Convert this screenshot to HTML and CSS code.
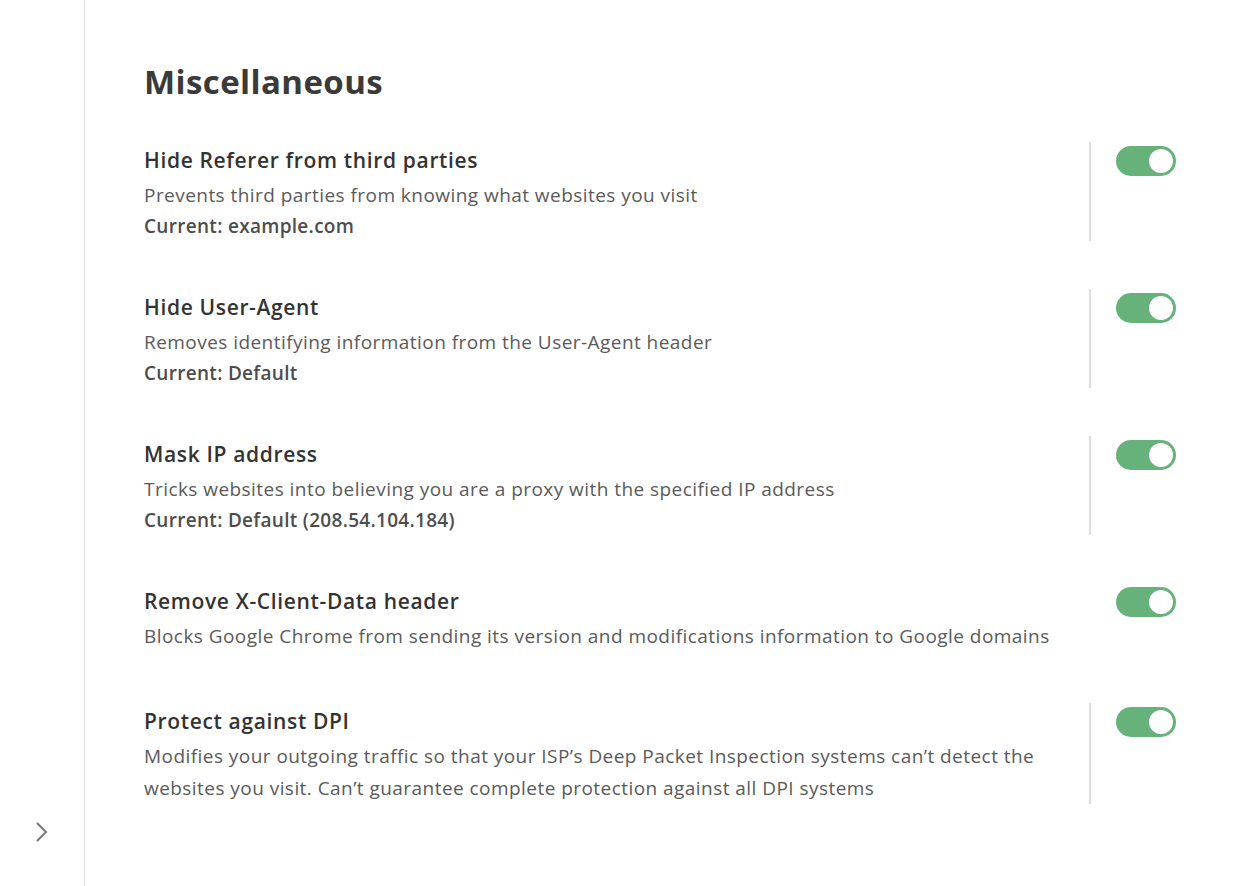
FILE: index.html
```html
<!DOCTYPE html>
<html lang="en">
<head>
<meta charset="utf-8">
<title>Miscellaneous</title>
<link rel="stylesheet" href="styles.css">
</head>
<body>
<div class="app">
  <aside class="sidebar">
    <svg class="chev" width="14" height="22" viewBox="0 0 14 22"><path d="M2 2 L11 11 L2 20" fill="none" stroke="#777" stroke-width="2"/></svg>
  </aside>
  <main class="content">
    <h1 class="heading">Miscellaneous</h1>
    <section class="rows">
      <div class="row">
        <div class="text">
          <div class="title">Hide Referer from third parties</div>
          <div class="desc">Prevents third parties from knowing what websites you visit</div>
          <div class="current">Current: example.com</div>
        </div>
        <div class="ctrl"><span class="toggle on"><span class="knob"></span></span></div>
      </div>
      <div class="row">
        <div class="text">
          <div class="title">Hide User-Agent</div>
          <div class="desc">Removes identifying information from the User-Agent header</div>
          <div class="current">Current: Default</div>
        </div>
        <div class="ctrl"><span class="toggle on"><span class="knob"></span></span></div>
      </div>
      <div class="row">
        <div class="text">
          <div class="title">Mask IP address</div>
          <div class="desc">Tricks websites into believing you are a proxy with the specified IP address</div>
          <div class="current">Current: Default (208.54.104.184)</div>
        </div>
        <div class="ctrl"><span class="toggle on"><span class="knob"></span></span></div>
      </div>
      <div class="row">
        <div class="text">
          <div class="title">Remove X-Client-Data header</div>
          <div class="desc">Blocks Google Chrome from sending its version and modifications information to Google domains</div>
        </div>
        <div class="ctrl no-line"><span class="toggle on"><span class="knob"></span></span></div>
      </div>
      <div class="row">
        <div class="text">
          <div class="title">Protect against DPI</div>
          <div class="desc">Modifies your outgoing traffic so that your ISP’s Deep Packet Inspection systems can’t detect the websites you visit. Can’t guarantee complete protection against all DPI systems</div>
        </div>
        <div class="ctrl"><span class="toggle on"><span class="knob"></span></span></div>
      </div>
    </section>
  </main>
</div>
</body>
</html>
```
FILE: styles.css
```css
html, body {
  margin: 0;
  padding: 0;
  background: #fff;
}
body {
  font-family: "Open Sans", "Noto Sans", "Liberation Sans", sans-serif;
  color: #333;
}
.app {
  display: flex;
  min-height: 886px;
}
.sidebar {
  width: 85px;
  border-right: 1px solid #dcdcdc;
  display: flex;
  flex-direction: column;
  justify-content: flex-end;
  align-items: flex-start;
  padding-left: 35px;
  padding-bottom: 43px;
  box-sizing: border-box;
  flex: none;
}
.chev { display: block; }
.content {
  flex: 1;
  padding: 56px 0 0 59px;
}
.heading {
  margin: 0 0 34px;
  font-size: 33px;
  line-height: 52px;
  font-weight: 700;
  color: #3a3a3a;
  letter-spacing: 0.4px;
}
.rows {
  display: flex;
  flex-direction: column;
  gap: 48px;
}
.row {
  display: flex;
  align-items: stretch;
  min-height: 72px;
}
.text {
  flex: 1;
  padding-right: 30px;
}
.title {
  font-size: 21px;
  line-height: 37px;
  font-weight: 600;
  color: #333;
  letter-spacing: 0.65px;
}
.desc {
  font-size: 19px;
  line-height: 32px;
  color: #5a5a5a;
  letter-spacing: 0.45px;
}
.current {
  font-size: 19px;
  line-height: 30px;
  font-weight: 600;
  color: #4d4d4d;
  letter-spacing: 0.3px;
}
.ctrl {
  flex: none;
  width: 147px;
  box-sizing: border-box;
  border-left: 2px solid #dedede;
  padding: 4px 60px 0 25px;
}
.ctrl.no-line { border-left-color: transparent; }
.toggle {
  display: flex;
  align-items: center;
  justify-content: flex-end;
  width: 60px;
  height: 30px;
  border-radius: 15px;
  background: #67b27a;
  padding: 3px;
  box-sizing: border-box;
}
.knob {
  width: 24px;
  height: 24px;
  border-radius: 50%;
  background: #fff;
}
```
